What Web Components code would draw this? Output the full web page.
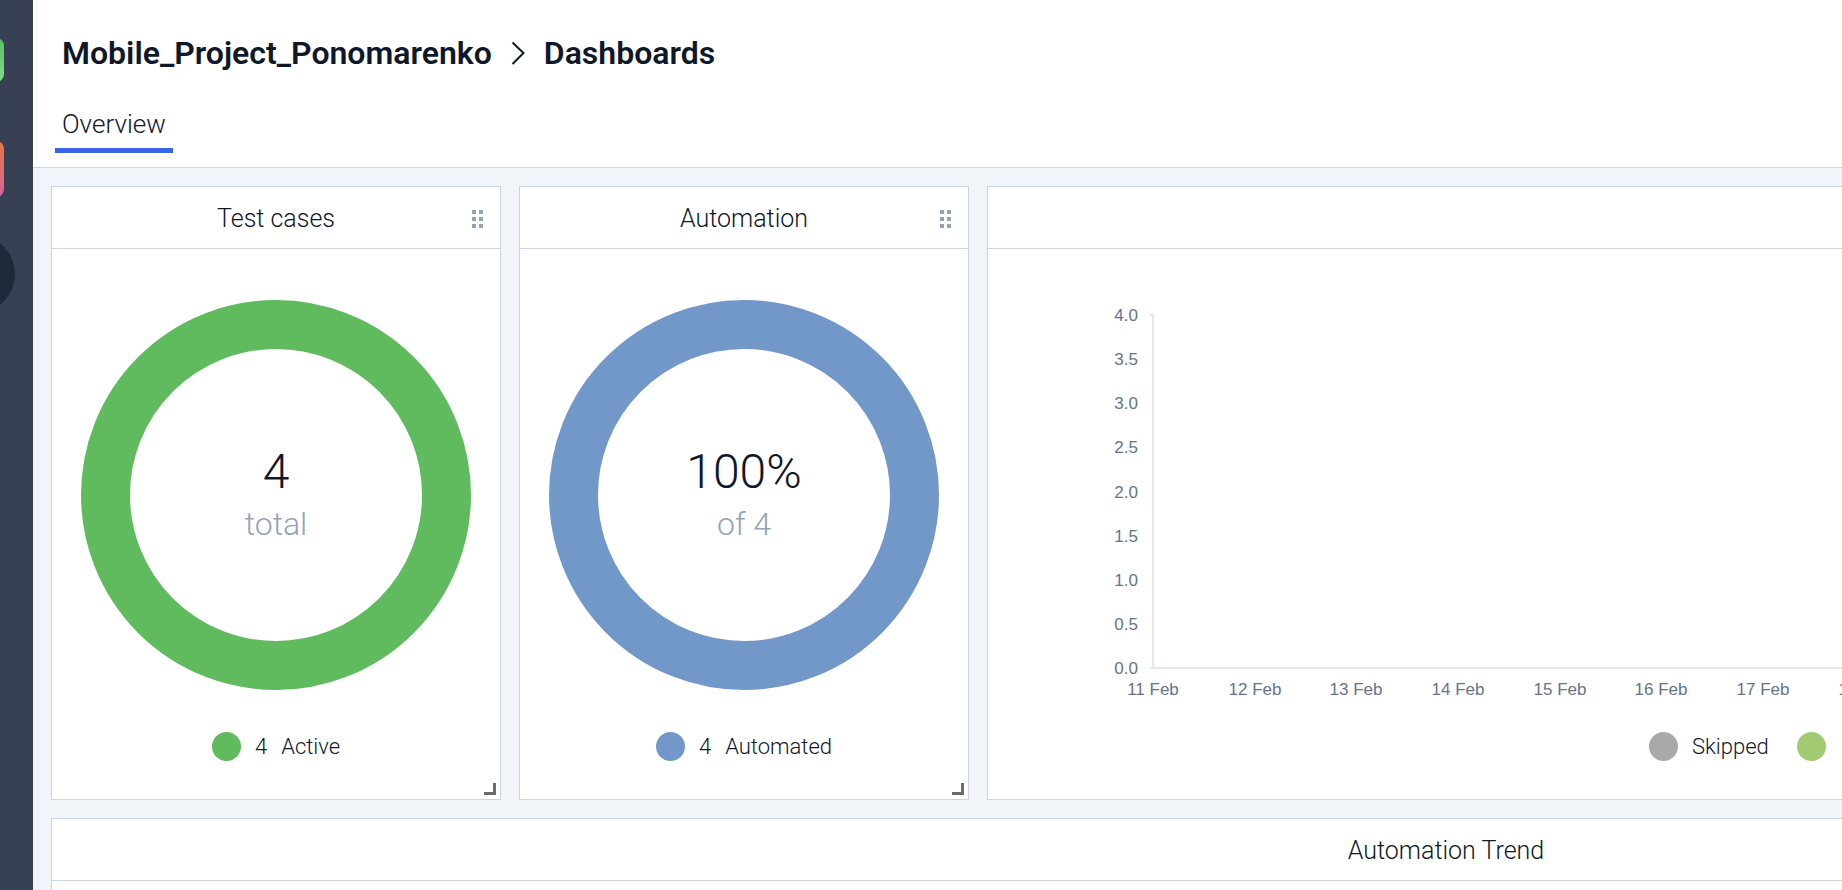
<!DOCTYPE html>
<html lang="en">
<head>
<meta charset="utf-8">
<title>Mobile_Project_Ponomarenko – Dashboards</title>
<style>
  html, body { margin: 0; height: 100%; }
  body { font-family: Roboto, "Liberation Sans", sans-serif; font-weight: 300; color: #0f172a; background: #f1f5f9; overflow: hidden; }
</style>
</head>
<body>
<app-shell>
  <side-bar slot="side"></side-bar>
  <page-header slot="header" project="Mobile_Project_Ponomarenko" page="Dashboards">
    <tab-link href="#overview">Overview</tab-link>
  </page-header>
  <dash-grid>
    <dash-card heading="Test cases" tools>
      <donut-chart value="4" note="total" color="#5fbb5d"></donut-chart>
      <legend-row><legend-item color="#5fbb5d" count="4">Active</legend-item></legend-row>
    </dash-card>
    <dash-card heading="Automation" tools>
      <donut-chart value="100%" note="of 4" color="#7297c9"></donut-chart>
      <legend-row><legend-item color="#7297c9" count="4">Automated</legend-item></legend-row>
    </dash-card>
    <dash-card>
      <time-chart></time-chart>
      <legend-row class="offset">
        <legend-item color="#a9a9a9">Skipped</legend-item>
        <legend-item color="#a2cb71"></legend-item>
      </legend-row>
    </dash-card>
    <dash-card class="full" heading="Automation Trend"></dash-card>
  </dash-grid>
</app-shell>

<script>
const define = (name, html, setup) => {
  const template = document.createElement('template');
  template.innerHTML = html;
  customElements.define(name, class extends HTMLElement {
    constructor() {
      super();
      this.attachShadow({ mode: 'open' }).append(template.content.cloneNode(true));
    }
    connectedCallback() {
      if (setup) setup(this, this.shadowRoot);
    }
  });
};

define('app-shell', `
  <style>
    :host { display: flex; height: 100vh; overflow: hidden; }
    main { flex: 1; min-width: 0; overflow: hidden; }
  </style>
  <slot name="side"></slot>
  <main><slot name="header"></slot><slot></slot></main>`);

define('side-bar', `
  <style>
    :host { flex: none; width: 33px; background: #374153; overflow: hidden; }
    nav { display: flex; flex-direction: column; align-items: flex-end; padding-top: 38px; }
    a { display: block; flex: none; margin-right: 29px; border-radius: 8px; }
    .home { width: 44px; height: 44px; background: linear-gradient(#5bbf5f, #7ddc8a); }
    .apps { width: 56px; height: 56px; margin-top: 59px; background: linear-gradient(#e8773f, #d8639f); }
    .user { width: 78px; height: 78px; margin: 38px 18px 0 0; border-radius: 50%; background: #1f2939; }
  </style>
  <nav>
    <a class="home" href="#home" aria-label="Home"></a>
    <a class="apps" href="#apps" aria-label="Apps"></a>
    <a class="user" href="#user" aria-label="Account"></a>
  </nav>`);

define('page-header', `
  <style>
    :host { display: block; background: #fff; border-bottom: 1px solid #cbd5e1; padding: 32px 29px 14px; }
    h1 { display: flex; align-items: center; margin: 0; font-size: 32px; line-height: 42px; font-weight: 600; }
    a { color: inherit; text-decoration: none; }
    svg { flex: none; margin: 0 19px; }
    nav { display: flex; margin: 27px -7px 0; }
  </style>
  <h1><a href="#project"></a>
    <svg width="14" height="24" viewBox="0 0 14 24" fill="none" stroke="#0f172a" stroke-width="2"><path d="M1.5 1.5 12.5 12 1.5 23"/></svg>
    <span></span></h1>
  <nav><slot></slot></nav>`, (el, root) => {
  root.querySelector('a').textContent = el.getAttribute('project');
  root.querySelector('span').textContent = el.getAttribute('page');
});

define('tab-link', `
  <style>
    :host { display: block; }
    a { display: block; padding: 7px 7px 8px; border-bottom: 5px solid #3b63e6; color: inherit; text-decoration: none; font-size: 26px; line-height: 32px; }
  </style>
  <a><slot></slot></a>`, (el, root) => {
  root.querySelector('a').href = el.getAttribute('href');
});

define('dash-grid', `
  <style>
    :host { display: grid; grid-template-columns: 450px 450px 1fr; gap: 18px; min-width: 2790px; padding: 18px; }
    ::slotted(.full) { grid-column: 1 / -1; }
  </style>
  <slot></slot>`);

define('dash-card', `
  <style>
    :host { display: block; position: relative; background: #fff; border: 1px solid #cbd5e1; min-height: 120px; }
    header { display: grid; grid-template-columns: 1fr auto 1fr; align-items: center; height: 59px; padding-top: 2px; border-bottom: 1px solid #cbd5e1; }
    h2 { grid-column: 2; margin: 0; font-size: 25px; line-height: 32px; font-weight: inherit; }
    button { display: block; border: 0; padding: 0; background: none; }
    .drag { justify-self: end; margin-right: 17px; cursor: grab; }
    .resize { position: absolute; right: 4px; bottom: 4px; width: 12px; height: 12px; border: solid #6b6b6b; border-width: 0 3px 3px 0; cursor: nwse-resize; }
    :host(:not([tools])) button { display: none; }
    svg { display: block; }
  </style>
  <header>
    <h2></h2>
    <button class="drag" aria-label="Move">
      <svg width="11" height="18" fill="#94a3b8"><path d="M0 0h4v4H0zM7 0h4v4H7zM0 7h4v4H0zM7 7h4v4H7zM0 14h4v4H0zM7 14h4v4H7z"/></svg>
    </button>
  </header>
  <slot></slot>
  <button class="resize" aria-label="Resize"></button>`, (el, root) => {
  root.querySelector('h2').textContent = el.getAttribute('heading') || '';
});

define('donut-chart', `
  <style>
    :host { display: grid; justify-content: center; align-items: center; padding-top: 51px; }
    svg, div { grid-area: 1 / 1; }
    svg { display: block; }
    div { text-align: center; }
    strong, span { display: block; }
    strong { font-size: 48px; line-height: 58px; font-weight: inherit; }
    span { font-size: 32px; line-height: 46px; color: #94a3b8; }
  </style>
  <svg width="390" height="390" fill="none" stroke-width="49"><circle cx="195" cy="195" r="170.5"/></svg>
  <div><strong></strong><span></span></div>`, (el, root) => {
  root.querySelector('circle').setAttribute('stroke', el.getAttribute('color'));
  root.querySelector('strong').textContent = el.getAttribute('value');
  root.querySelector('span').textContent = el.getAttribute('note');
});

define('legend-row', `
  <style>
    :host { display: flex; justify-content: center; gap: 28px; padding: 42px 0 38px; }
    :host(.offset) { justify-content: flex-start; padding: 21px 0 38px 661px; }
  </style>
  <slot></slot>`);

define('legend-item', `
  <style>
    :host { display: flex; align-items: center; gap: 14px; font-size: 22px; line-height: 29px; }
    i { width: 29px; height: 29px; border-radius: 50%; }
    b { font-weight: inherit; }
    b:empty { display: none; }
  </style>
  <i></i><b></b><span><slot></slot></span>`, (el, root) => {
  root.querySelector('i').style.background = el.getAttribute('color');
  root.querySelector('b').textContent = el.getAttribute('count') || '';
});

define('time-chart', `
  <style>
    :host { display: block; }
    svg { display: block; width: 100%; height: 462px; }
    text { font-family: "Liberation Sans", Arial, sans-serif; font-size: 17px; fill: #64748b; font-weight: 400; }
    .y { text-anchor: end; }
    .x { text-anchor: middle; }
    path { fill: none; stroke: #e2e8f0; stroke-width: 2; }
  </style>
  <svg role="img" aria-label="Results by day"><path d="M162 66H165V419M162 419H1700"/></svg>`, (el, root) => {
  const svg = root.querySelector('svg');
  const label = (kind, x, y, text) => {
    const node = document.createElementNS('http://www.w3.org/2000/svg', 'text');
    node.setAttribute('class', kind);
    node.setAttribute('x', x);
    node.setAttribute('y', y);
    node.textContent = text;
    svg.append(node);
  };
  for (let i = 0; i <= 8; i++) label('y', 150, Math.round(72 + i * 353 / 8), (4 - i / 2).toFixed(1));
  for (let i = 0; i <= 7; i++) label('x', Math.round(165 + i * 305 / 3), 446, (11 + i) + ' Feb');
});
</script>
</body>
</html>
